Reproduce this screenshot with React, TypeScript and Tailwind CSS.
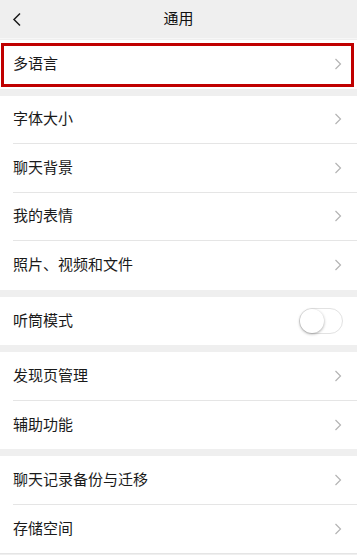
import React from 'react';

const font = { fontFamily: '"Liberation Sans", "Noto Sans CJK SC", sans-serif' };

function Chevron() {
  return (
    <svg width="8" height="12" viewBox="0 0 8 12" className="shrink-0">
      <path d="M1.5 1 L6.5 6 L1.5 11" fill="none" stroke="#b4b4b4" strokeWidth="1.2" />
    </svg>
  );
}

function Row({ label, last, right }: { label: string; last?: boolean; right?: React.ReactNode }) {
  return (
    <div className="h-[48.5px] pl-[13px] bg-white">
      <div
        className={`h-full flex items-center justify-between pr-[15px] ${last ? '' : 'border-b border-[#e5e5e5]'}`}
      >
        <span className="text-[15px] text-[#1a1a1a]">{label}</span>
        {right ?? <Chevron />}
      </div>
    </div>
  );
}

function Toggle() {
  return (
    <div className="w-[44px] h-[26px] rounded-full border border-[#e2e2e2] bg-white flex items-center -mr-[1px]">
      <div className="w-[24px] h-[24px] rounded-full bg-white shadow-[0_1px_3px_rgba(0,0,0,0.35)]" />
    </div>
  );
}

export default function App() {
  return (
    <div className="w-[357px] h-[555px] bg-[#efefef] overflow-hidden" style={font}>
      <div className="h-[39px] flex items-center justify-center relative border-b border-[#f7f7f7]">
        <svg width="10" height="16" viewBox="0 0 10 16" className="absolute left-[12px] top-[12px]">
          <path d="M8 1.5 L2 7.5 L8 13.5" fill="none" stroke="#1a1a1a" strokeWidth="1.5" />
        </svg>
        <span className="text-[15px] text-[#111]">通用</span>
      </div>

      <div className="relative mt-[1px]">
        <Row label="多语言" last />
        <div className="absolute left-[1px] right-[3px] top-[3px] bottom-[2px] border-[3px] border-[#c00000] pointer-events-none" />
      </div>

      <div className="mt-[7px]">
        <Row label="字体大小" />
        <Row label="聊天背景" />
        <Row label="我的表情" />
        <Row label="照片、视频和文件" last />
      </div>

      <div className="mt-[7px]">
        <Row label="听筒模式" last right={<Toggle />} />
      </div>

      <div className="mt-[7px]">
        <Row label="发现页管理" />
        <Row label="辅助功能" last />
      </div>

      <div className="mt-[7px] border-b border-[#e5e5e5]">
        <Row label="聊天记录备份与迁移" />
        <Row label="存储空间" last />
      </div>
    </div>
  );
}
